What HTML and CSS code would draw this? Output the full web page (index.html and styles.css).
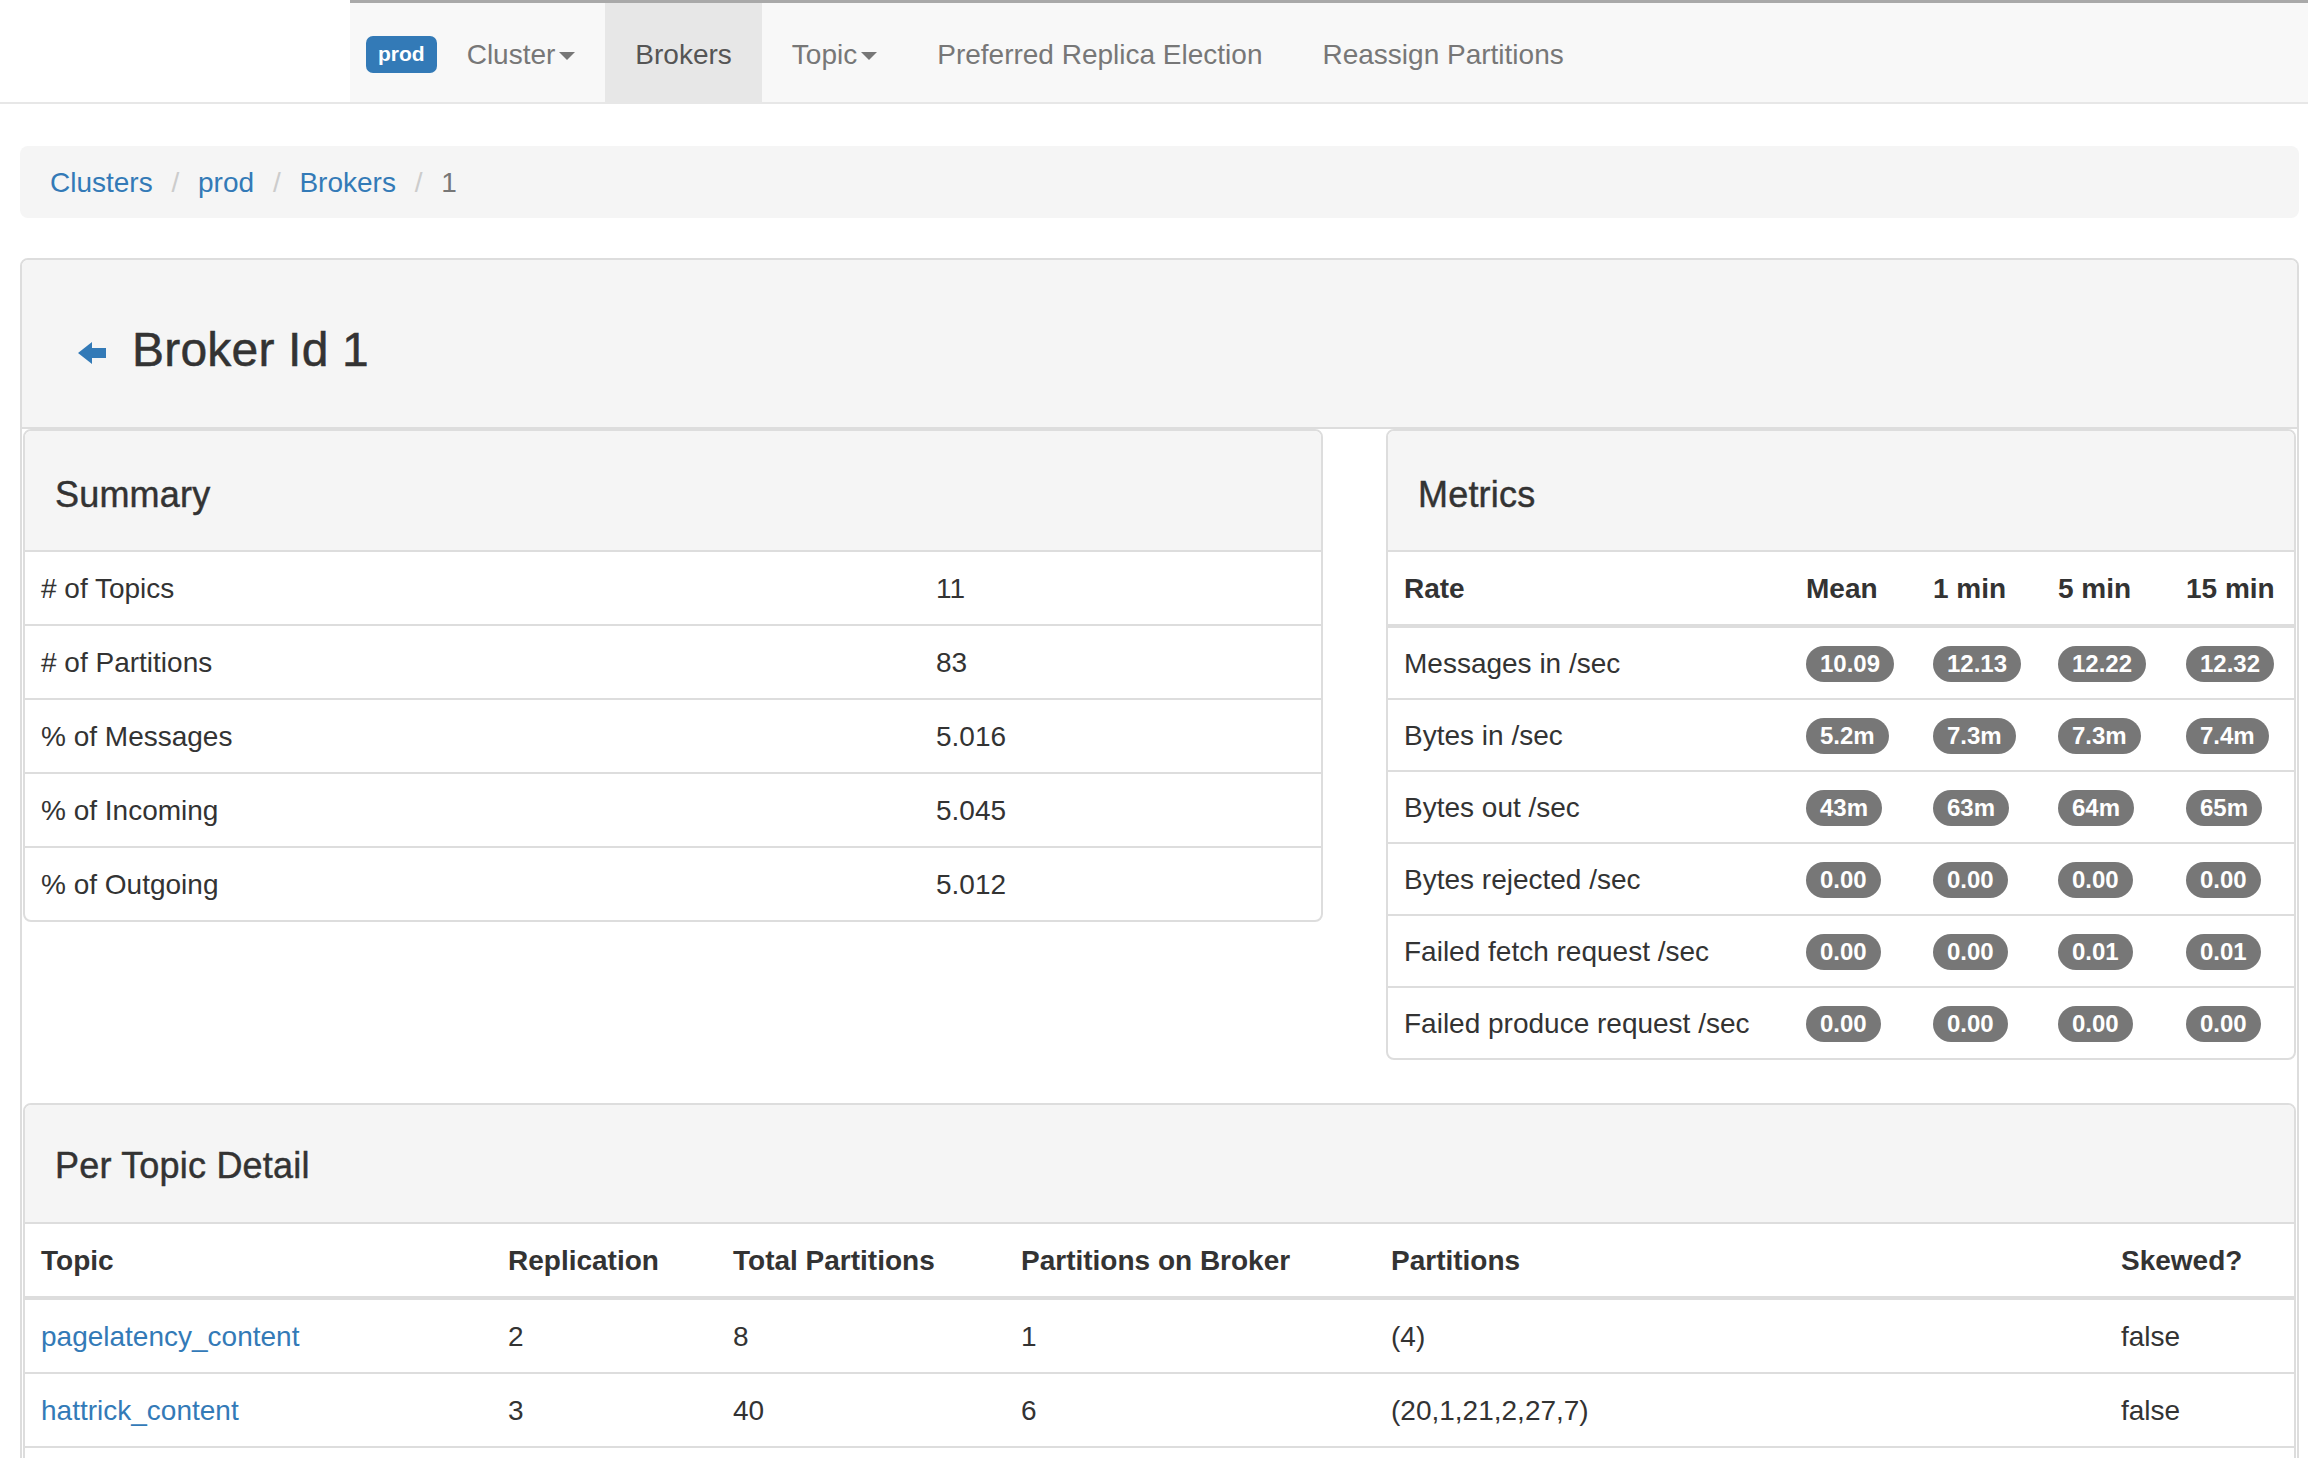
FILE: index.html
```html
<!DOCTYPE html>
<html lang="en">
<head>
<meta charset="utf-8">
<title>Broker Id 1 - Kafka Manager</title>
<link rel="stylesheet" href="styles.css">
</head>
<body>
<header class="navbar">
  <div class="navbar-spacer"></div>
  <nav class="navbar-main">
    <span class="env-label">prod</span>
    <a class="nav-link" href="#">Cluster<span class="caret"></span></a>
    <a class="nav-link active" href="#">Brokers</a>
    <a class="nav-link" href="#">Topic<span class="caret"></span></a>
    <a class="nav-link" href="#">Preferred Replica Election</a>
    <a class="nav-link" href="#">Reassign Partitions</a>
  </nav>
</header>

<main class="page">
  <ol class="breadcrumb">
    <li><a href="#">Clusters</a></li>
    <li><a href="#">prod</a></li>
    <li><a href="#">Brokers</a></li>
    <li class="active">1</li>
  </ol>

  <section class="panel outer">
    <div class="panel-heading broker-heading">
      <h3 class="broker-title">
        <a class="back" href="#"><svg width="28" height="22" viewBox="0 0 28 22"><polygon points="0,11 14,0 14,6 28,6 28,16 14,16 14,22" fill="#337ab7"/></svg></a>
        <span>Broker Id 1</span>
      </h3>
    </div>

    <div class="row">
      <div class="panel sub-panel">
        <div class="panel-heading sub-heading"><h4>Summary</h4></div>
        <table class="summary-table">
          <tbody>
            <tr><td class="label-col"># of Topics</td><td>11</td></tr>
            <tr><td># of Partitions</td><td>83</td></tr>
            <tr><td>% of Messages</td><td>5.016</td></tr>
            <tr><td>% of Incoming</td><td>5.045</td></tr>
            <tr><td>% of Outgoing</td><td>5.012</td></tr>
          </tbody>
        </table>
      </div>

      <div class="panel sub-panel">
        <div class="panel-heading sub-heading"><h4>Metrics</h4></div>
        <table class="metrics-table">
          <thead>
            <tr><th>Rate</th><th class="c-mean">Mean</th><th class="c-1">1 min</th><th class="c-5">5 min</th><th class="c-15">15 min</th></tr>
          </thead>
          <tbody>
            <tr><td>Messages in /sec</td><td><span class="badge">10.09</span></td><td><span class="badge">12.13</span></td><td><span class="badge">12.22</span></td><td><span class="badge">12.32</span></td></tr>
            <tr><td>Bytes in /sec</td><td><span class="badge">5.2m</span></td><td><span class="badge">7.3m</span></td><td><span class="badge">7.3m</span></td><td><span class="badge">7.4m</span></td></tr>
            <tr><td>Bytes out /sec</td><td><span class="badge">43m</span></td><td><span class="badge">63m</span></td><td><span class="badge">64m</span></td><td><span class="badge">65m</span></td></tr>
            <tr><td>Bytes rejected /sec</td><td><span class="badge">0.00</span></td><td><span class="badge">0.00</span></td><td><span class="badge">0.00</span></td><td><span class="badge">0.00</span></td></tr>
            <tr><td>Failed fetch request /sec</td><td><span class="badge">0.00</span></td><td><span class="badge">0.00</span></td><td><span class="badge">0.01</span></td><td><span class="badge">0.01</span></td></tr>
            <tr><td>Failed produce request /sec</td><td><span class="badge">0.00</span></td><td><span class="badge">0.00</span></td><td><span class="badge">0.00</span></td><td><span class="badge">0.00</span></td></tr>
          </tbody>
        </table>
      </div>
    </div>

    <div class="panel topics-panel">
      <div class="panel-heading topics-heading"><h4>Per Topic Detail</h4></div>
      <table class="topics-table">
        <thead>
          <tr>
            <th class="t-topic">Topic</th>
            <th class="t-repl">Replication</th>
            <th class="t-total">Total Partitions</th>
            <th class="t-onbroker">Partitions on Broker</th>
            <th class="t-parts">Partitions</th>
            <th>Skewed?</th>
          </tr>
        </thead>
        <tbody>
          <tr><td><a href="#">pagelatency_content</a></td><td>2</td><td>8</td><td>1</td><td>(4)</td><td>false</td></tr>
          <tr><td><a href="#">hattrick_content</a></td><td>3</td><td>40</td><td>6</td><td>(20,1,21,2,27,7)</td><td>false</td></tr>
          <tr class="more"><td colspan="6">&nbsp;</td></tr>
        </tbody>
      </table>
    </div>
  </section>
</main>
</body>
</html>
```

FILE: styles.css
```css
* {
  box-sizing: border-box;
}

html, body {
  margin: 0;
  padding: 0;
}

body {
  font-family: "Liberation Sans", Arial, Helvetica, sans-serif;
  font-size: 28px;
  line-height: 40px;
  color: #333;
  background: #fff;
}

a {
  color: #337ab7;
  text-decoration: none;
}

/* ---------- navbar ---------- */
.navbar {
  display: flex;
  height: 104px;
  border-bottom: 2px solid #e7e7e7;
  margin-bottom: 42px;
}

.navbar-spacer {
  width: 350px;
  background: #fff;
}

.navbar-main {
  flex: 1;
  display: flex;
  background: #f8f8f8;
  border-top: 3px solid #a9a9a9;
  padding-left: 16px;
}

.env-label {
  align-self: center;
  margin-top: 4px;
  background: #337ab7;
  color: #fff;
  font-weight: bold;
  font-size: 21px;
  line-height: 21px;
  padding: 7px 12px 9px;
  border-radius: 7px;
}

.nav-link {
  display: flex;
  align-items: center;
  padding: 4px 30px 0;
  color: #777;
}

.nav-link.active {
  background: #e7e7e7;
  color: #555;
}

.caret {
  display: inline-block;
  width: 0;
  height: 0;
  margin-left: 4px;
  margin-top: 2px;
  border-top: 8px solid #777;
  border-left: 8px solid transparent;
  border-right: 8px solid transparent;
}

/* ---------- page ---------- */
.page {
  padding: 0 9px 0 20px;
}

.breadcrumb {
  list-style: none;
  margin: 0 0 40px;
  padding: 17px 30px 15px;
  background: #f5f5f5;
  border-radius: 8px;
}

.breadcrumb li {
  display: inline-block;
}

.breadcrumb li + li::before {
  content: "/\00a0";
  padding: 0 11px;
  color: #ccc;
}

.breadcrumb .active {
  color: #777;
}

/* ---------- panels ---------- */
.panel {
  border: 2px solid #ddd;
  border-radius: 8px;
  background: #fff;
  overflow: hidden;
}

.panel-heading {
  background: #f5f5f5;
  border-bottom: 2px solid #ddd;
}

.broker-heading {
  padding: 63px 56px 51px;
}

.broker-title {
  display: flex;
  align-items: center;
  margin: 0;
  font-size: 48px;
  line-height: 53px;
  font-weight: 500;
  color: #333;
  -webkit-text-stroke: 0.5px #333;
  letter-spacing: 0.2px;
}

.back {
  display: flex;
  margin-top: 6px;
  margin-right: 26px;
}

.row {
  display: grid;
  grid-template-columns: 1300px 1fr;
  column-gap: 63px;
  align-items: start;
  padding: 0 1px;
}

.sub-panel {
  margin-bottom: 40px;
}

.sub-heading {
  padding: 44px 30px 35px;
}

.sub-heading h4,
.topics-heading h4 {
  margin: 0;
  font-size: 36px;
  line-height: 40px;
  font-weight: 500;
  color: #333;
  -webkit-text-stroke: 0.45px #333;
  letter-spacing: 0.2px;
}

.topics-panel {
  margin: 3px 1px 0;
}

.topics-heading {
  padding: 41px 30px 36px;
}

/* ---------- tables ---------- */
table {
  width: 100%;
  border-collapse: separate;
  border-spacing: 0;
  table-layout: fixed;
}

th, td {
  text-align: left;
  vertical-align: middle;
  padding: 17px 16px 15px;
}

th {
  font-weight: bold;
  border-bottom: 4px solid #ddd;
}

tbody tr + tr td {
  border-top: 2px solid #ddd;
}

.label-col {
  width: 895px;
}

.metrics-table td {
  padding: 16px 16px 14px;
}

.c-mean { width: 127px; }
.c-1 { width: 125px; }
.c-5 { width: 128px; }
.c-15 { width: 124px; }

.badge {
  display: inline-block;
  vertical-align: middle;
  background: #777;
  color: #fff;
  font-weight: bold;
  font-size: 24px;
  line-height: 24px;
  padding: 6px 14px;
  border-radius: 20px;
  margin-top: -4px;
}

.t-topic { width: 467px; }
.t-repl { width: 225px; }
.t-total { width: 288px; }
.t-onbroker { width: 370px; }
.t-parts { width: 730px; }
```
